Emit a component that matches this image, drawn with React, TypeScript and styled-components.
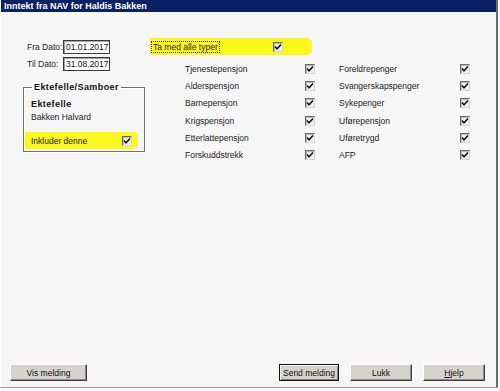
import React from "react";
import styled, { createGlobalStyle } from "styled-components";

const GlobalStyle = createGlobalStyle`
  html, body {
    margin: 0;
    padding: 0;
    background: #ffffff;
  }
  body {
    font-family: "Liberation Sans", Arial, sans-serif;
    font-size: 8.5px;
    color: #222;
  }
`;

const Window = styled.div`
  box-sizing: border-box;
  width: 498px;
  height: 388px;
  display: flex;
  flex-direction: column;
  background: #f6f6f6;
  border-left: 1px solid #fdfdfd;
  border-right: 2px solid #6c6c6c;
  border-bottom: 1px solid #9c9c9c;
`;

const TitleBar = styled.div`
  height: 12px;
  line-height: 12px;
  padding-left: 3px;
  background: #0a2263;
  color: #fff;
  font-weight: bold;
  font-size: 9px;
  white-space: nowrap;
`;

const Body = styled.div`
  flex: 1;
  display: flex;
  flex-direction: column;
  padding-top: 26px;
`;

const TopArea = styled.div`
  display: flex;
  padding-left: 22px;
`;

const LeftColumn = styled.div`
  width: 127px;
  display: flex;
  flex-direction: column;
`;

const DateRow = styled.div<{ $top: number }>`
  display: flex;
  align-items: center;
  height: 14px;
  margin-top: ${(p) => p.$top}px;
  margin-left: 4px;
`;

const DateLabel = styled.span`
  width: 36px;
  white-space: nowrap;
`;

const DateInput = styled.div`
  box-sizing: border-box;
  width: 47px;
  height: 14px;
  line-height: 12px;
  padding-left: 2px;
  background: #fff;
  border: 1px solid #3c3c3c;
  box-shadow: inset 1px 1px 0 #a0a0a0;
  font-size: 8.5px;
  color: #111;
  white-space: nowrap;
  overflow: hidden;
`;

const GroupBox = styled.fieldset`
  box-sizing: border-box;
  width: 122px;
  height: 70px;
  margin: 11px 0 0 0;
  padding: 5px 6px 0 1px;
  border: 1px solid #707070;
  box-shadow: 1px 1px 0 #fff, inset 1px 1px 0 #fff;
`;

const Legend = styled.legend`
  margin-left: 7px;
  padding: 0 2px;
  font-weight: bold;
  font-size: 9px;
  letter-spacing: 0.4px;
  line-height: 11px;
  color: #111;
`;

const SpouseTitle = styled.div`
  margin-left: 6px;
  font-weight: bold;
  font-size: 9px;
  letter-spacing: 0.4px;
  line-height: 13px;
  color: #111;
`;

const SpouseName = styled.div`
  margin-left: 6px;
  line-height: 13px;
`;

const Highlight = styled.div<{ $width?: number }>`
  display: flex;
  align-items: center;
  height: 17px;
  width: ${(p) => (p.$width ? `${p.$width}px` : "auto")};
  background: #f9fa1c;
  border-radius: 2px 5px 5px 2px;
`;

const IncludeRow = styled(Highlight)`
  margin-top: 8px;
  padding: 0 6px 0 6px;
  justify-content: space-between;
`;

const RightArea = styled.div`
  display: flex;
  flex-direction: column;
`;

const FocusText = styled.span`
  margin-left: 2px;
  padding: 0 1px;
  line-height: 10px;
  outline: 1px dotted #333;
  white-space: nowrap;
`;

const AllTypesBox = styled.span`
  margin-left: auto;
  margin-right: 29px;
  display: flex;
`;

const TypeGrid = styled.div`
  display: grid;
  grid-template-columns: 130px 131px;
  grid-template-rows: repeat(6, 17.3px);
  grid-auto-flow: column;
  column-gap: 24px;
  margin: 5px 0 0 35px;
`;

const TypeItem = styled.div`
  display: flex;
  align-items: center;
  justify-content: space-between;
`;

const CheckBoxFrame = styled.span`
  box-sizing: border-box;
  width: 10px;
  height: 10px;
  display: inline-flex;
  align-items: center;
  justify-content: center;
  background: #f0f0f0;
  border: 1px solid;
  border-color: #6a6a6a #d6d6d6 #d6d6d6 #6a6a6a;
  box-shadow: inset 1px 1px 0 #b8b8b8;
`;

const ButtonBar = styled.div`
  margin-top: auto;
  display: flex;
  align-items: flex-end;
  gap: 11px;
  padding: 0 11px 6px 9px;
`;

const Button = styled.button<{ $width: number; $default?: boolean }>`
  box-sizing: border-box;
  width: ${(p) => p.$width}px;
  height: 17px;
  padding: 0;
  font-family: "Liberation Sans", Arial, sans-serif;
  font-size: 8.5px;
  color: #111;
  background: #d6d3cc;
  border: 1px solid;
  border-color: ${(p) => (p.$default ? "#111 #111 #111 #111" : "#fff #404040 #404040 #fff")};
  box-shadow: ${(p) =>
    p.$default
      ? "inset 1px 1px 0 #fff, inset -1px -1px 0 #808080"
      : "inset -1px -1px 0 #8a8a8a"};
  &:first-child {
    margin-right: auto;
  }
`;

const Mnemonic = styled.span`
  text-decoration: underline;
`;

const CheckBox: React.FC = () => (
  <CheckBoxFrame>
    <svg width="8" height="8" viewBox="0 0 8 8">
      <polyline points="1,3.6 3,5.8 7,1.6" fill="none" stroke="#111" strokeWidth="1.5" />
    </svg>
  </CheckBoxFrame>
);

const types = [
  "Tjenestepensjon",
  "Alderspensjon",
  "Barnepensjon",
  "Krigspensjon",
  "Etterlattepensjon",
  "Forskuddstrekk",
  "Foreldrepenger",
  "Svangerskapspenger",
  "Sykepenger",
  "Uførepensjon",
  "Uføretrygd",
  "AFP",
];

const App: React.FC = () => {
  return (
    <>
      <GlobalStyle />
      <Window>
        <TitleBar>Inntekt fra NAV for Haldis Bakken</TitleBar>
        <Body>
          <TopArea>
            <LeftColumn>
              <DateRow $top={2}>
                <DateLabel>Fra Dato:</DateLabel>
                <DateInput>01.01.2017</DateInput>
              </DateRow>
              <DateRow $top={3}>
                <DateLabel>Til Dato:</DateLabel>
                <DateInput>31.08.2017</DateInput>
              </DateRow>
              <GroupBox>
                <Legend>Ektefelle/Samboer</Legend>
                <SpouseTitle>Ektefelle</SpouseTitle>
                <SpouseName>Bakken Halvard</SpouseName>
                <IncludeRow>
                  <span>Inkluder denne</span>
                  <CheckBox />
                </IncludeRow>
              </GroupBox>
            </LeftColumn>
            <RightArea>
              <Highlight $width={162}>
                <FocusText>Ta med alle typer</FocusText>
                <AllTypesBox>
                  <CheckBox />
                </AllTypesBox>
              </Highlight>
              <TypeGrid>
                {types.map((t) => (
                  <TypeItem key={t}>
                    <span>{t}</span>
                    <CheckBox />
                  </TypeItem>
                ))}
              </TypeGrid>
            </RightArea>
          </TopArea>
          <ButtonBar>
            <Button $width={77}>Vis melding</Button>
            <Button $width={60} $default>
              Send melding
            </Button>
            <Button $width={62}>Lukk</Button>
            <Button $width={62}>
              <Mnemonic>H</Mnemonic>jelp
            </Button>
          </ButtonBar>
        </Body>
      </Window>
    </>
  );
};

export default App;
